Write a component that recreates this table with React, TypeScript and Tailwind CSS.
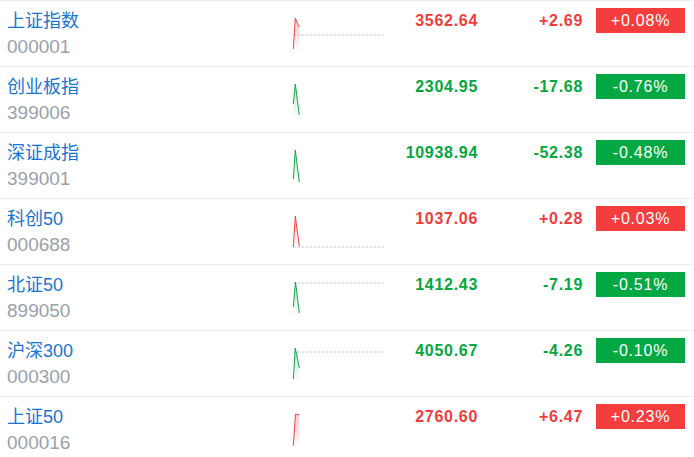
import React from "react";

type Row = {
  name: string;
  code: string;
  price: string;
  change: string;
  pct: string;
  up: boolean;
  pts: [number, number][];
  base: number | null;
};

const rows: Row[] = [
  { name: "上证指数", code: "000001", price: "3562.64", change: "+2.69", pct: "+0.08%", up: true, pts: [[1.3, 48], [3.3, 17], [5, 21], [7.3, 26]], base: 34 },
  { name: "创业板指", code: "399006", price: "2304.95", change: "-17.68", pct: "-0.76%", up: false, pts: [[1.3, 37], [3.3, 17], [7.3, 48]], base: null },
  { name: "深证成指", code: "399001", price: "10938.94", change: "-52.38", pct: "-0.48%", up: false, pts: [[1.3, 46], [3.3, 17], [7.3, 49]], base: null },
  { name: "科创50", code: "000688", price: "1037.06", change: "+0.28", pct: "+0.03%", up: true, pts: [[1.3, 48], [3.3, 17], [7.3, 47]], base: 48 },
  { name: "北证50", code: "899050", price: "1412.43", change: "-7.19", pct: "-0.51%", up: false, pts: [[1.3, 42], [3.5, 17], [7.3, 48]], base: 18 },
  { name: "沪深300", code: "000300", price: "4050.67", change: "-4.26", pct: "-0.10%", up: false, pts: [[1.3, 48], [3.3, 17], [7.3, 37]], base: 21 },
  { name: "上证50", code: "000016", price: "2760.60", change: "+6.47", pct: "+0.23%", up: true, pts: [[1.3, 49], [3.5, 17], [7.3, 18]], base: null },
];

function Spark({ r, i }: { r: Row; i: number }) {
  const color = r.up ? "#f04444" : "#11a84a";
  const line = r.pts.map((p) => p.join(",")).join(" ");
  const area = `${r.pts[0][0]},52 ${line} ${r.pts[r.pts.length - 1][0]},52`;
  const id = `g${i}`;
  return (
    <svg width="94" height="66" viewBox="0 0 94 66" className="shrink-0">
      <defs>
        <linearGradient id={id} x1="0" y1="0" x2="0" y2="1">
          <stop offset="0%" stopColor={color} stopOpacity="0.28" />
          <stop offset="100%" stopColor={color} stopOpacity="0" />
        </linearGradient>
      </defs>
      {r.base !== null && (
        <line x1="1.5" y1={r.base} x2="91.5" y2={r.base} stroke="#c4c7d2" strokeWidth="1" strokeDasharray="2.5 1.5" />
      )}
      <polygon points={area} fill={`url(#${id})`} />
      <polyline points={line} fill="none" stroke={color} strokeWidth="1" strokeLinejoin="round" />
    </svg>
  );
}

export default function App() {
  return (
    <div
      className="w-[694px] bg-white"
      style={{ fontFamily: '"Liberation Sans", Arial, "Noto Sans CJK SC", sans-serif' }}
    >
      {rows.map((r, i) => {
        const txt = r.up ? "text-[#f23c3c]" : "text-[#04a73f]";
        const bg = r.up ? "bg-[#f43d3d]" : "bg-[#03a843]";
        return (
          <div key={r.code} className="flex h-[66px] border-t border-[#e9eef4] pl-[7px]">
            <div className="w-[285px] shrink-0 pt-[7px]">
              <div className="text-[18px] leading-[26px] text-[#1875d2]">{r.name}</div>
              <div className="text-[19px] leading-[26px] text-[#9aa1aa]">{r.code}</div>
            </div>
            <Spark r={r} i={i} />
            <div className={`w-[92px] shrink-0 pt-[7px] text-right text-[16px] font-bold leading-[25px] tracking-[0.7px] ${txt}`}>
              {r.price}
            </div>
            <div className={`w-[105px] shrink-0 pt-[7px] text-right text-[16px] font-bold leading-[25px] tracking-[0.7px] ${txt}`}>
              {r.change}
            </div>
            <div className="ml-[13px] pt-[7px]">
              <div className={`flex h-[25px] w-[89px] items-center justify-center text-[16px] tracking-[0.8px] text-white ${bg}`}>
                {r.pct}
              </div>
            </div>
          </div>
        );
      })}
    </div>
  );
}
